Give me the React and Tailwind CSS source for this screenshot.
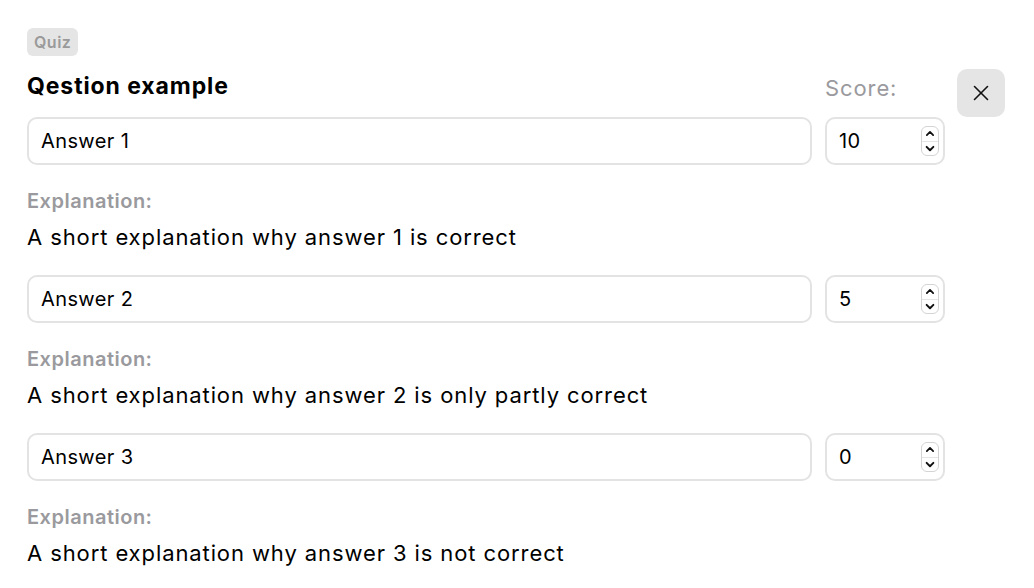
import { X } from 'lucide-react';

const answers = [
  { text: 'Answer 1', score: '10', explanation: 'A short explanation why answer 1 is correct' },
  { text: 'Answer 2', score: '5', explanation: 'A short explanation why answer 2 is only partly correct' },
  { text: 'Answer 3', score: '0', explanation: 'A short explanation why answer 3 is not correct' },
];

function Spinner() {
  return (
    <div className="flex flex-col items-center w-[18px] h-[30px] rounded-[6px] border border-[#d4d4d4] overflow-hidden">
      <svg width="18" height="15" viewBox="0 0 18 15" className="border-b border-[#e5e5e5]">
        <path d="M5.5 9 L9 5.5 L12.5 9" fill="none" stroke="#111" strokeWidth="2" strokeLinecap="round" strokeLinejoin="round" />
      </svg>
      <svg width="18" height="14" viewBox="0 0 18 14">
        <path d="M5.5 5 L9 8.5 L12.5 5" fill="none" stroke="#111" strokeWidth="2" strokeLinecap="round" strokeLinejoin="round" />
      </svg>
    </div>
  );
}

function AnswerRow({ answer }) {
  return (
    <div className="flex flex-col">
      <div className="flex gap-[13px]">
        <div className="w-[785px] h-[48px] rounded-[10px] border-2 border-[#e3e3e3] flex items-center px-[12px] text-[20px] tracking-[0.4px] text-black">
          {answer.text}
        </div>
        <div className="w-[120px] h-[48px] rounded-[10px] border-2 border-[#e3e3e3] flex items-center justify-between pl-[12px] pr-[4px] text-[20px] tracking-[0.4px] text-black">
          <span>{answer.score}</span>
          <Spinner />
        </div>
      </div>
      <div className="mt-[22px] text-[20px] font-semibold text-[#9a9a9e] tracking-[0.5px] leading-[28px]">Explanation:</div>
      <div className="mt-[8px] text-[22px] text-black tracking-[0.9px] leading-[28px]">{answer.explanation}</div>
    </div>
  );
}

export default function App() {
  return (
    <div className="w-[1034px] h-[588px] bg-white overflow-hidden font-['Inter',sans-serif]">
      <div className="flex pl-[27px] pt-[28px]">
        <div className="flex flex-col">
          <span className="self-start rounded-[6px] bg-[#e5e5e5] px-[7px] h-[28px] flex items-center text-[16px] font-semibold tracking-[0.5px] text-[#9a9a9a]">
            Quiz
          </span>
          <div className="flex items-end justify-between mt-[14px] h-[30px]">
            <h1 className="text-[23px] font-bold text-black tracking-[0.9px] leading-[28px]">Qestion example</h1>
            <span className="text-[22px] text-[#9a9a9e] tracking-[0.9px] leading-[28px] w-[120px] translate-y-[2px]">Score:</span>
          </div>
          <div className="mt-[17px] flex flex-col gap-[24px]">
            {answers.map((a) => (
              <AnswerRow key={a.text} answer={a} />
            ))}
          </div>
        </div>
        <div className="ml-[12px] mt-[41px]">
          <button className="w-[48px] h-[48px] rounded-[10px] bg-[#e5e5e5] flex items-center justify-center">
            <X size={26} strokeWidth={1.5} color="#111" />
          </button>
        </div>
      </div>
    </div>
  );
}
